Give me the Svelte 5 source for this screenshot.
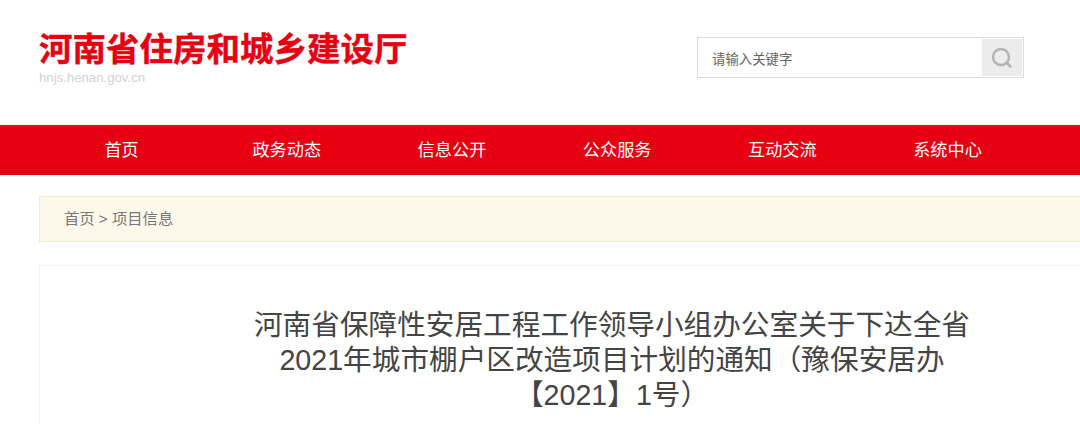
<script>
  const nav = ['首页', '政务动态', '信息公开', '公众服务', '互动交流', '系统中心'];
</script>

<div class="page">
  <header class="top">
    <div class="brand">
      <div class="title">河南省住房和城乡建设厅</div>
      <div class="domain">hnjs.henan.gov.cn</div>
    </div>
    <div class="search">
      <span class="ph">请输入关键字</span>
      <span class="btn">
        <svg width="24" height="24" viewBox="0 0 24 24" fill="none" stroke="#b4b4b4">
          <circle cx="11" cy="11" r="8" stroke-width="2.4"/>
          <path d="M17 17 20.5 20.5" stroke-width="2.8" stroke-linecap="round"/>
        </svg>
      </span>
    </div>
  </header>
  <nav class="nav">
    {#each nav as n}
      <span class="item">{n}</span>
    {/each}
  </nav>
  <div class="crumb">首页 &gt; 项目信息</div>
  <main class="card">
    <h1>河南省保障性安居工程工作领导小组办公室关于下达全省<br/>2021年城市棚户区改造项目计划的通知（豫保安居办<br/>【2021】1号）</h1>
  </main>
</div>

<style>
  :global(body) {
    margin: 0;
    background: #fff;
  }
  .page {
    width: 1080px;
    height: 424px;
    overflow: hidden;
    font-family: "Liberation Sans", "Noto Sans CJK SC", sans-serif;
  }
  .top {
    height: 125px;
    display: flex;
    justify-content: space-between;
    padding: 30px 56px 0 39px;
    box-sizing: border-box;
  }
  .title {
    font-size: 33.5px;
    line-height: 40px;
    font-weight: 700;
    color: #e60012;
    white-space: nowrap;
    -webkit-text-stroke: 0.4px #e60012;
  }
  .domain {
    font-size: 13.2px;
    line-height: 16px;
    color: #d2d2d2;
  }
  .search {
    width: 327px;
    height: 41px;
    margin-top: 7px;
    border: 1px solid #dcdcdc;
    box-sizing: border-box;
    display: flex;
    align-items: center;
    justify-content: space-between;
    padding: 1px 1px 1px 14px;
  }
  .ph {
    font-size: 13.4px;
    color: #666;
  }
  .btn {
    width: 40px;
    height: 37px;
    background: #ececec;
    display: flex;
    align-items: center;
    justify-content: center;
  }
  .nav {
    height: 50px;
    background: #e60012;
    display: flex;
    padding-left: 39px;
  }
  .item {
    width: 165.2px;
    text-align: center;
    color: #fff;
    font-size: 17.2px;
    line-height: 50px;
    white-space: nowrap;
  }
  .crumb {
    margin: 21px 0 0 39px;
    height: 46px;
    box-sizing: border-box;
    border: 1px solid #f5e9cf;
    border-right: 0;
    background: #fdf9ea;
    padding-left: 24px;
    font-size: 15.3px;
    line-height: 44px;
    color: #777;
  }
  .card {
    margin: 23px 0 0 39px;
    height: 200px;
    border: 1px solid #f2f2f2;
    border-right: 0;
    box-sizing: border-box;
    padding-top: 42px;
  }
  h1 {
    margin: 0 0 0 177px;
    width: 790px;
    font-size: 28.65px;
    line-height: 35px;
    font-weight: 400;
    color: #444;
    text-align: center;
  }
</style>
